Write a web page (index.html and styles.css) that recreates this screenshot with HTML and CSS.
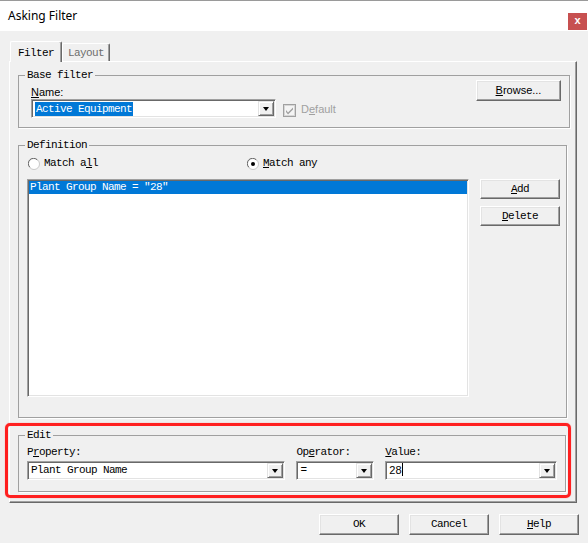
FILE: index.html
```html
<!DOCTYPE html>
<html lang="en">
<head>
    <meta charset="UTF-8">
    <title>Asking Filter</title>
    <link rel="stylesheet" href="styles.css">
</head>
<body>
<div class="titlebar">
    <span class="title">Asking Filter</span>
    <span class="close">x</span>
</div>

<div class="client">
    <div class="tabs">
        <div class="tab active mono">Filter</div>
        <div class="tab mono dim">Layout</div>
    </div>

    <div class="panel">
        <fieldset class="group base">
            <legend class="mono">Base filter</legend>
            <div class="base-row">
                <div class="name-col">
                    <div class="label"><u>N</u>ame:</div>
                    <div class="combo">
                        <span class="combo-text"><span class="sel mono">Active Equipment</span></span>
                        <span class="drop"><i></i></span>
                    </div>
                </div>
                <svg class="check" width="13" height="13" viewBox="0 0 13 13">
                    <rect x="0.5" y="0.5" width="12" height="12" fill="#f4f4f4" stroke="#a0a0a0"/>
                    <rect x="1.5" y="1.5" width="10" height="10" fill="none" stroke="#d6d6d6"/>
                    <path d="M3 6 L5 8.5 L10 3.5 L10 5.5 L5 10.5 L3 8 Z" fill="#a0a0a0"/>
                </svg>
                <span class="label disabled">D<u>e</u>fault</span>
                <div class="btn browse"><u>B</u>rowse...</div>
            </div>
        </fieldset>

        <fieldset class="group definition">
            <legend class="mono">Definition</legend>
            <div class="radios mono">
                <label class="radio first">
                    <svg width="12" height="12" viewBox="0 0 12 12">
                        <circle cx="6" cy="6" r="5.5" fill="#fff" stroke="#c8c8c8"/>
                        <path d="M1.8 9.2 A4.6 4.6 0 0 1 9.2 1.8" fill="none" stroke="#696969"/>
                    </svg>
                    <span>Match a<u>l</u>l</span>
                </label>
                <label class="radio">
                    <svg width="12" height="12" viewBox="0 0 12 12">
                        <circle cx="6" cy="6" r="5.5" fill="#fff" stroke="#c8c8c8"/>
                        <path d="M1.8 9.2 A4.6 4.6 0 0 1 9.2 1.8" fill="none" stroke="#696969"/>
                        <circle cx="6" cy="6" r="2" fill="#000"/>
                    </svg>
                    <span><u>M</u>atch any</span>
                </label>
            </div>
            <div class="def-body">
                <div class="list mono">
                    <div class="row selected">Plant Group Name = "28"</div>
                </div>
                <div class="side">
                    <div class="btn mono"><u>A</u>dd</div>
                    <div class="btn mono"><u>D</u>elete</div>
                </div>
            </div>
        </fieldset>

        <fieldset class="group edit">
            <legend class="mono">Edit</legend>
            <div class="edit-row">
                <div class="field property">
                    <div class="label mono">P<u>r</u>operty:</div>
                    <div class="combo">
                        <span class="combo-text mono">Plant Group Name</span>
                        <span class="drop"><i></i></span>
                    </div>
                </div>
                <div class="field operator">
                    <div class="label mono">Op<u>e</u>rator:</div>
                    <div class="combo">
                        <span class="combo-text mono">=</span>
                        <span class="drop"><i></i></span>
                    </div>
                </div>
                <div class="field value">
                    <div class="label mono"><u>V</u>alue:</div>
                    <div class="combo">
                        <span class="combo-text">28<b class="caret"></b></span>
                        <span class="drop"><i></i></span>
                    </div>
                </div>
            </div>
        </fieldset>
    </div>

    <div class="actions">
        <div class="btn mono">OK</div>
        <div class="btn mono">Cancel</div>
        <div class="btn mono"><u>H</u>elp</div>
    </div>
</div>

<div class="mark"></div>
</body>
</html>
```

FILE: styles.css
```css
* {
  box-sizing: border-box;
}
body {
  margin: 0;
  width: 588px;
  height: 543px;
  overflow: hidden;
  position: relative;
  background: #f0f0f0;
  font: 11px "Liberation Sans", Arial, sans-serif;
  color: #000;
}
u {
  text-decoration: underline;
  text-underline-offset: 1px;
}
.mono {
  font-family: "Liberation Mono", "Courier New", monospace;
  font-size: 11px;
  letter-spacing: -0.6px;
}

/* window caption */
.titlebar {
  height: 31px;
  background: #fff;
  border-top: 1px solid #9a9a9a;
  display: flex;
}
.title {
  font: 12px "Noto Sans", sans-serif;
  line-height: 16px;
  padding: 7px 0 0 8px;
}
.close {
  margin-left: auto;
  margin-top: 12px;
  margin-right: 1px;
  width: 19px;
  height: 17px;
  background: #c75050;
  color: #fff;
  font: bold 11px "Liberation Sans", sans-serif;
  line-height: 15px;
  text-align: center;
}

.client {
  padding: 10px 0 0 9px;
}

/* tabs */
.tabs {
  display: flex;
  align-items: flex-end;
  height: 20px;
  margin-left: 1px;
}
.tab {
  border: 1px solid;
  border-color: #fff #696969 transparent #fff;
  border-bottom: none;
  border-radius: 2px 2px 0 0;
  background: #f0f0f0;
  box-shadow: inset -1px 0 0 #a0a0a0;
  height: 18px;
  width: 48px;
  padding: 3px 0 0 5px;
  line-height: 13px;
}
.tab.active {
  position: relative;
  z-index: 1;
  height: 21px;
  width: 52px;
  margin-bottom: -1px;
  padding: 5px 0 0 7px;
}
.tab.dim {
  color: #6d6d6d;
}

.panel {
  width: 568px;
  border: 1px solid;
  border-color: #fff #696969 #696969 #fff;
  box-shadow: inset -1px -1px 0 #a0a0a0;
  padding: 7px 0 10px 8px;
}

/* group boxes */
.group {
  margin: 0;
  min-width: 0;
  border: 1px solid #a0a0a0;
  box-shadow: 1px 1px 0 #fff;
  padding: 0 8px 9px 8px;
}
.group legend {
  padding: 0 2px;
  margin-left: -2px;
  line-height: 12px;
}
.group.base {
  width: 552px;
}
.group.definition {
  width: 549px;
  margin-top: 11px;
  padding: 0 6px 20px 8px;
}
.group.edit {
  width: 548px;
  margin-top: 11px;
  padding: 0 8px 11px 8px;
}

.label {
  line-height: 13px;
}
.label.disabled {
  color: #a0a0a0;
}

.base-row {
  display: flex;
  padding-left: 4px;
}
.name-col {
  width: 245px;
  padding-top: 5px;
}
.check {
  align-self: flex-end;
  margin: 0 0 1px 7px;
}
.base-row .disabled {
  align-self: flex-end;
  margin: 0 0 2px 5px;
}
.browse {
  margin-left: auto;
  margin-top: -1px;
  width: 85px;
  height: 21px;
}

/* combo boxes */
.combo {
  display: flex;
  height: 19px;
  background: #fff;
  border: 1px solid;
  border-color: #a0a0a0 #fff #fff #a0a0a0;
  box-shadow: inset 1px 1px 0 #696969, inset -1px -1px 0 #e3e3e3;
  padding: 1px;
}
.combo-text {
  flex: 1;
  line-height: 15px;
  padding-left: 2px;
  white-space: nowrap;
  overflow: hidden;
}
.sel {
  display: inline-block;
  background: #0078d7;
  color: #fff;
  padding: 0 1px;
  line-height: 15px;
}
.caret {
  display: inline-block;
  width: 1px;
  height: 13px;
  background: #000;
  vertical-align: -2px;
}
.drop {
  width: 16px;
  height: 15px;
  background: #f0f0f0;
  border: 1px solid;
  border-color: #e3e3e3 #696969 #696969 #e3e3e3;
  box-shadow: inset 1px 1px 0 #fff, inset -1px -1px 0 #a0a0a0;
  display: flex;
  align-items: center;
  justify-content: center;
}
.drop i {
  width: 1px;
  height: 0;
  border-left: 3px solid transparent;
  border-right: 3px solid transparent;
  border-top: 4px solid #000;
  margin-top: 1px;
}

/* buttons */
.btn {
  background: #f0f0f0;
  border: 1px solid;
  border-color: #fff #696969 #696969 #fff;
  box-shadow: inset -1px -1px 0 #a0a0a0, inset 1px 1px 0 #e3e3e3;
  display: flex;
  align-items: center;
  justify-content: center;
  line-height: 13px;
}

/* definition */
.radios {
  display: flex;
  padding-top: 6px;
  height: 19px;
  line-height: 13px;
}
.radio {
  display: flex;
  align-items: center;
  gap: 4px;
  margin-left: 1px;
}
.radio.first {
  width: 218px;
}
.def-body {
  display: flex;
  gap: 11px;
  margin-top: 9px;
}
.list {
  width: 442px;
  height: 218px;
  background: #fff;
  border: 1px solid;
  border-color: #a0a0a0 #fff #fff #a0a0a0;
  box-shadow: inset 1px 1px 0 #696969, inset -1px -1px 0 #e3e3e3;
  padding: 1px;
}
.row {
  line-height: 13px;
  padding-left: 1px;
}
.row.selected {
  background: #0078d7;
  color: #fff;
}
.side {
  display: flex;
  flex-direction: column;
  gap: 7px;
}
.side .btn {
  width: 80px;
  height: 20px;
}

/* edit */
.edit-row {
  display: flex;
  gap: 11px;
}
.field .label {
  padding-top: 5px;
  height: 20px;
}
.property {
  width: 259px;
}
.operator {
  width: 78px;
}
.value {
  width: 172px;
}

.actions {
  display: flex;
  justify-content: flex-end;
  gap: 10px;
  margin-top: 11px;
  padding-right: 9px;
}
.actions .btn {
  width: 80px;
  height: 21px;
}

/* red highlight round the edit group */
.mark {
  position: absolute;
  left: 5px;
  top: 423px;
  width: 566px;
  height: 75px;
  border: 3px solid #ff2020;
  border-radius: 5px;
  box-shadow: 0 0 1px #ff6060;
}
```
